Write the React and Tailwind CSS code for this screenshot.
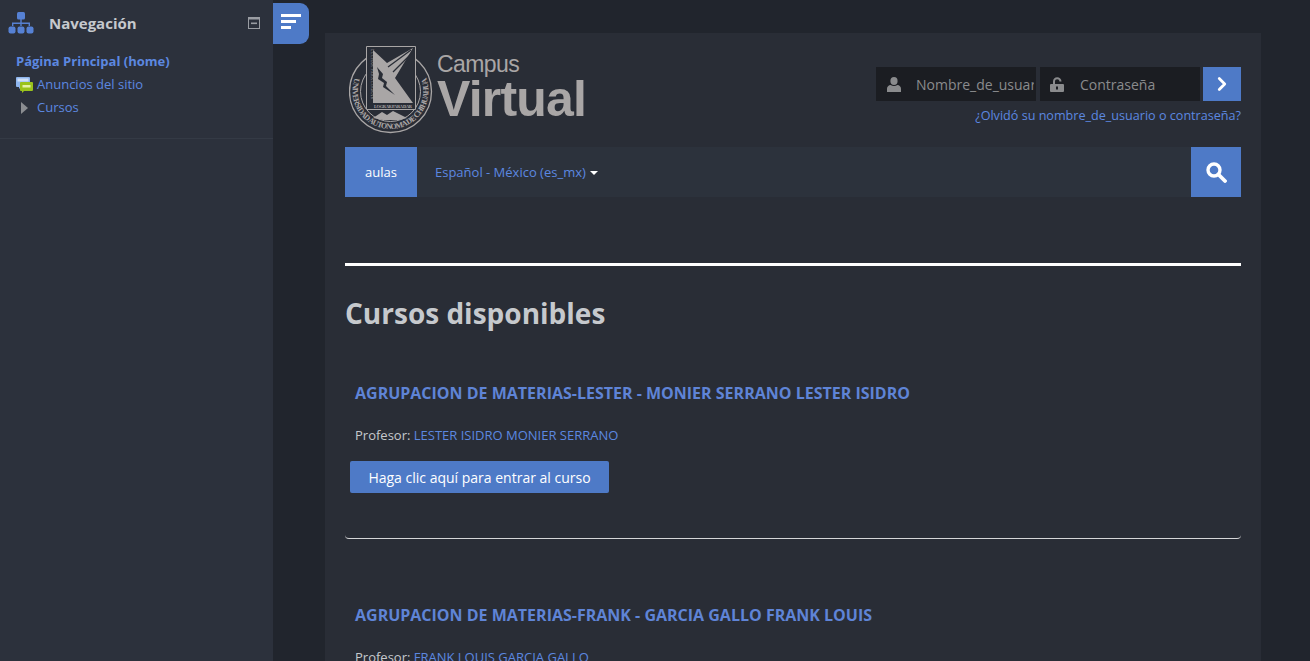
import { ChevronRight } from "lucide-react";

const SiteMapIcon = () => (
  <svg width="26" height="22" viewBox="0 0 26 22" fill="#5681d4">
    <rect x="9" y="0" width="8" height="7.5" rx="1.5" />
    <path d="M12.3 7h1.4v3.6H22V14h-1.4v-2h-6.9v2h-1.4v-2H5.4v2H4v-3.4h8.3z" />
    <rect x="0.5" y="14.5" width="7" height="7" rx="2" />
    <rect x="9.5" y="14.5" width="7" height="7" rx="2" />
    <rect x="18.5" y="14.5" width="7" height="7" rx="2" />
  </svg>
);

const ChatIcon = () => (
  <svg width="17" height="16" viewBox="0 0 17 16">
    <path d="M1 0h12a1 1 0 0 1 1 1v8a1 1 0 0 1-1 1H5l-2 2v-2H1a1 1 0 0 1-1-1V1a1 1 0 0 1 1-1z" fill="#8fb6ee" />
    <rect x="1.5" y="1.5" width="11" height="3" fill="#cfe0f8" />
    <path d="M5 5h11a1 1 0 0 1 1 1v7a1 1 0 0 1-1 1h-8l-2 2v-2H5a1 1 0 0 1-1-1V6a1 1 0 0 1 1-1z" fill="#9ac31c" />
    <rect x="6.5" y="8" width="8" height="2.5" fill="#e4f2a8" />
  </svg>
);

const CollapseIcon = () => (
  <svg width="12" height="12" viewBox="0 0 12 12" fill="none">
    <rect x="0.5" y="0.5" width="11" height="11" stroke="#9a9da3" />
    <rect x="0.5" y="0.5" width="11" height="2" fill="#9a9da3" />
    <rect x="3" y="5.5" width="6" height="1.6" fill="#9a9da3" />
  </svg>
);

const UserIcon = () => (
  <svg width="14" height="15" viewBox="0 0 14 15" fill="#8a8b8d" className="shrink-0">
    <ellipse cx="7" cy="4" rx="3.6" ry="4" />
    <path d="M0 15v-3.2C0 9.6 1.6 8.2 3.6 8c1 .7 2.1 1 3.4 1s2.4-.3 3.4-1c2 .2 3.6 1.6 3.6 3.8V15z" />
  </svg>
);

const LockIcon = () => (
  <svg width="15" height="15" viewBox="0 0 15 15" fill="#8a8b8d" className="shrink-0">
    <path d="M3 7V4.4C3 2 4.8.3 7.2.3S11.500 2 11.500 4.4H9.400c0-1.300-.9-2.100-2.200-2.100S5 3.100 5 4.400V7z" />
    <path d="M1 7h12a1 1 0 0 1 1 1v6a1 1 0 0 1-1 1H1a1 1 0 0 1-1-1V8a1 1 0 0 1 1-1zm5 2.500v3h2v-3z" fillRule="evenodd" />
  </svg>
);

const SearchIcon = () => (
  <svg width="21" height="21" viewBox="0 0 21 21" fill="none" stroke="white">
    <circle cx="8" cy="8" r="6" strokeWidth="3.400" />
    <path d="M12.500 12.500L19 19" strokeWidth="3.800" strokeLinecap="round" />
  </svg>
);

const Seal = () => (
  <svg width="84" height="89" viewBox="0 0 84 89" className="shrink-0">
    <defs>
      <path id="sealRing" d="M5.800 33A38 38 0 1 0 77.200 33" />
    </defs>
    <circle cx="41.500" cy="46.500" r="41" fill="none" stroke="#a9a6a6" strokeWidth="1.300" />
    <circle cx="41.500" cy="46.500" r="30" fill="none" stroke="#a9a6a6" strokeWidth="1" />
    <text fontFamily="'Liberation Serif', serif" fontSize="8" fontWeight="700" fill="#a9a6a6">
      <textPath href="#sealRing" textLength="146" lengthAdjust="spacing">UNIVERSIDAD AUTONOMA DE CHIHUAHUA</textPath>
    </text>
    <path d="M17 1h50v64H17z" fill="#292d36" />
    <path d="M17.500 1.500h49v63h-49z" fill="none" stroke="#a9a6a6" />
    <path d="M24 5l14 13L64 3 46 33l18 25H24z" fill="#a9a6a6" />
    <path d="M28 22l6 7-1 4 5 4-1 4 9 9-12-8 1-4-6-4 1-5z" fill="#292d36" />
    <path d="M39 22L62 5M44 27L63 8" stroke="#292d36" strokeWidth="1.300" />
    <text x="25" y="63" fontFamily="'Liberation Serif', serif" fontSize="4.500" fontWeight="700" fill="#a9a6a6" textLength="38">
      LOGRAR PARA DAR
    </text>
    <text transform="translate(22 4) rotate(90)" fontFamily="'Liberation Serif', serif" fontSize="3.800" fill="#a9a6a6" textLength="50">
      LUCHAR PARA LOGRAR
    </text>
    <path d="M24 73l9-6 5 3 6-4 6 3 8 4-8 2H34z" fill="#a9a6a6" />
  </svg>
);

function Course({ title, teacher }) {
  return (
    <div>
      <h3 className="ml-[10px] text-[16px] leading-[22px] font-bold text-[#5f84d6]">{title}</h3>
      <p className="mt-[21px] ml-[10px] text-[13px] leading-[20px] text-[#c6c9cd]">
        Profesor: <a className="text-[#5c88e0]">{teacher}</a>
      </p>
      <button className="mt-[16px] ml-[5px] h-[32px] w-[259px] rounded-[2px] bg-[#4e7ac7] text-[14px] text-white">
        Haga clic aquí para entrar al curso
      </button>
      <div className="mt-[40px] h-[6px] rounded-b-[4px] border-b border-[#d5d6d8]" />
    </div>
  );
}

export default function App() {
  return (
    <div className="relative flex h-[661px] overflow-hidden bg-[#21252d] font-['Open_Sans',sans-serif]">
      {/* Sidebar */}
      <aside className="h-full w-[273px] shrink-0 bg-[#2c313c]">
        <div className="h-[139px] border-b border-[#343a45]">
          <div className="flex items-center pt-[9px] pl-[8px] pr-[13px]">
            <SiteMapIcon />
            <h2 className="ml-[15px] flex-1 text-[15px] leading-[28px] font-bold text-[#c6c9cd]">Navegación</h2>
            <CollapseIcon />
          </div>
          <ul className="mt-[13px] pl-[16px] text-[13px] leading-[23px] text-[#5c88e0]">
            <li className="font-bold">Página Principal (home)</li>
            <li className="flex items-center gap-[4px]">
              <ChatIcon />
              Anuncios del sitio
            </li>
            <li className="flex items-center">
              <span className="ml-[5px] mr-[9px] h-0 w-0 border-y-[6px] border-l-[7px] border-y-transparent border-l-[#8b8d91]" />
              Cursos
            </li>
          </ul>
        </div>
      </aside>

      {/* Toggle */}
      <button className="absolute top-[3px] left-[273px] flex h-[41px] w-[36px] flex-col gap-[3px] rounded-r-[9px] bg-[#4e7ac7] pt-[11px] pl-[8px]">
        <span className="h-[3px] w-[20px] bg-white" />
        <span className="h-[3px] w-[15px] bg-white" />
        <span className="h-[3px] w-[10px] bg-white" />
      </button>

      {/* Main */}
      <main className="mt-[33px] ml-[52px] w-[936px] bg-[#292d36] px-[20px]">
        <header className="flex h-[114px] justify-between">
          <div className="mt-[12px] ml-[4px] flex">
            <Seal />
            <div className="ml-[4px] font-['Liberation_Sans',sans-serif] text-[#a9a6a6]">
              <div className="mt-[8px] text-[23px] leading-[23px] tracking-[-0.6px]">Campus</div>
              <div className="text-[50px] leading-[46px] font-bold tracking-[-0.8px]">Virtual</div>
            </div>
          </div>
          <div className="mt-[34px] flex flex-col items-end">
            <div className="flex">
              <div className="flex h-[34px] w-[160px] items-center bg-[#1b1d22] pr-[2px] pl-[11px] text-[14px] whitespace-nowrap text-[#8a8b8d]">
                <UserIcon />
                <span className="ml-[15px] overflow-hidden">Nombre_de_usuario</span>
              </div>
              <div className="ml-[4px] flex h-[34px] w-[160px] items-center bg-[#1b1d22] pl-[10px] text-[14px] text-[#8a8b8d]">
                <LockIcon />
                <span className="ml-[15px]">Contraseña</span>
              </div>
              <button className="ml-[3px] flex h-[34px] w-[38px] items-center justify-center bg-[#4e7ac7]">
                <ChevronRight size={22} color="white" strokeWidth={3} />
              </button>
            </div>
            <a className="mt-[6px] text-[12.6px] leading-[18px] text-[#5c88e0]">¿Olvidó su nombre_de_usuario o contraseña?</a>
          </div>
        </header>

        <nav className="flex h-[50px] items-center bg-[#2c323c]">
          <a className="flex h-full w-[72px] items-center justify-center bg-[#4e7ac7] pt-[1px] text-[13px] text-white">aulas</a>
          <a className="ml-[18px] flex items-center pt-[1px] text-[13px] text-[#5c88e0]">
            Español - México (es_mx)
            <span className="ml-[4px] h-0 w-0 border-x-[4px] border-t-[4px] border-x-transparent border-t-white" />
          </a>
          <button className="ml-auto flex h-full w-[50px] items-center justify-center bg-[#4e7ac7]">
            <SearchIcon />
          </button>
        </nav>

        <div className="mt-[66px] h-[3px] bg-white" />
        <h2 className="mt-[28px] text-[28px] leading-[38px] font-bold text-[#c6c9cd]">Cursos disponibles</h2>

        <div className="mt-[50px]">
          <Course title="AGRUPACION DE MATERIAS-LESTER - MONIER SERRANO LESTER ISIDRO" teacher="LESTER ISIDRO MONIER SERRANO" />
        </div>
        <div className="mt-[65px]">
          <Course title="AGRUPACION DE MATERIAS-FRANK - GARCIA GALLO FRANK LOUIS" teacher="FRANK LOUIS GARCIA GALLO" />
        </div>
      </main>
    </div>
  );
}
